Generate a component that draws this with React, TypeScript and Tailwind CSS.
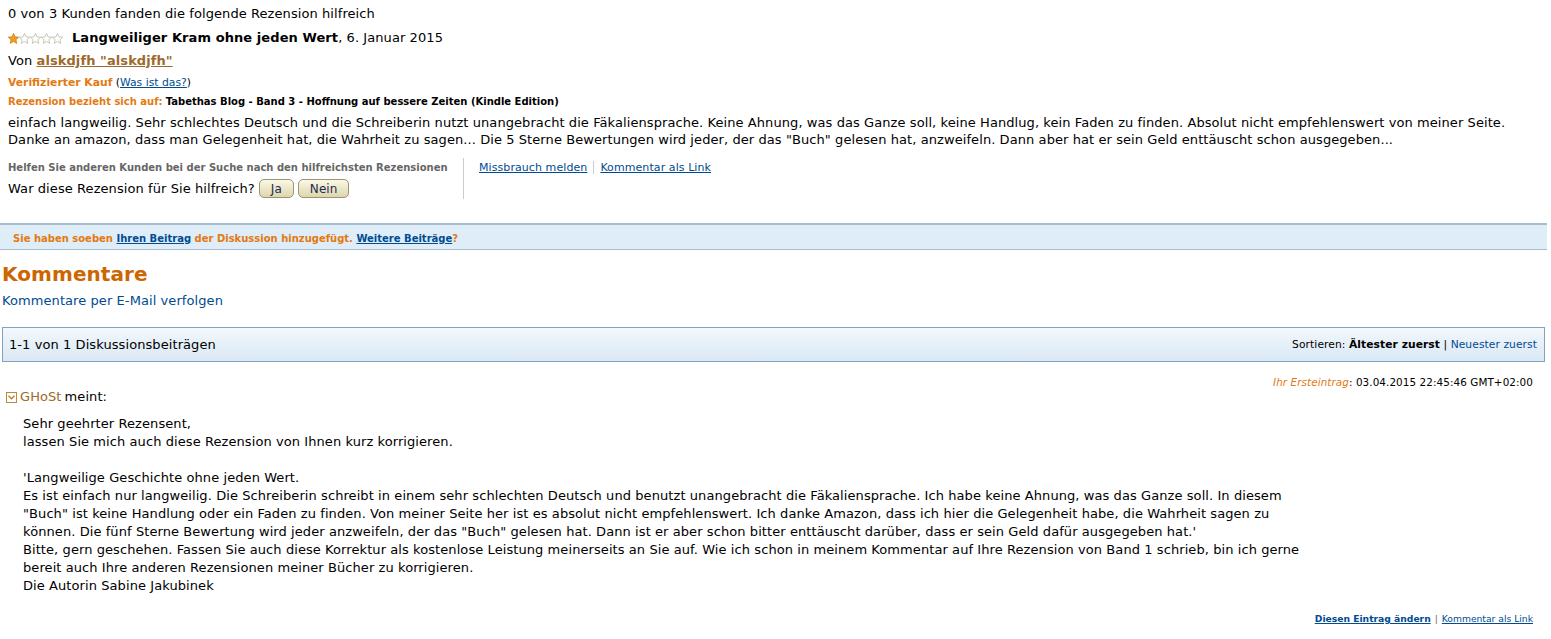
import React from "react";

function Star({ filled }: { filled: boolean }) {
  return (
    <svg width="11" height="11" viewBox="1 1 22 22" className="shrink-0">
      <path
        d="M12 1.8l3 6.9 7.5.7-5.7 5 1.7 7.4L12 17.9l-6.5 3.9 1.7-7.4-5.7-5 7.5-.7z"
        fill={filled ? "#f0a11c" : "#fff"}
        stroke={filled ? "#c97b10" : "#b5b5a0"}
        strokeWidth="1.5"
        strokeLinejoin="round"
      />
    </svg>
  );
}

function VoteButton({ label }: { label: string }) {
  return (
    <button className="h-[19px] px-[11px] rounded-[5px] border border-[#9a9470] bg-gradient-to-b from-[#fbf8e6] to-[#ddd6ae] text-[12px] leading-none text-[#1c2a55]">
      {label}
    </button>
  );
}

const body = [
  "Sehr geehrter Rezensent,",
  "lassen Sie mich auch diese Rezension von Ihnen kurz korrigieren.",
  "",
  "'Langweilige Geschichte ohne jeden Wert.",
  "Es ist einfach nur langweilig. Die Schreiberin schreibt in einem sehr schlechten Deutsch und benutzt unangebracht die Fäkaliensprache. Ich habe keine Ahnung, was das Ganze soll. In diesem",
  "\"Buch\" ist keine Handlung oder ein Faden zu finden. Von meiner Seite her ist es absolut nicht empfehlenswert. Ich danke Amazon, dass ich hier die Gelegenheit habe, die Wahrheit sagen zu",
  "können. Die fünf Sterne Bewertung wird jeder anzweifeln, der das \"Buch\" gelesen hat. Dann ist er aber schon bitter enttäuscht darüber, dass er sein Geld dafür ausgegeben hat.'",
  "Bitte, gern geschehen. Fassen Sie auch diese Korrektur als kostenlose Leistung meinerseits an Sie auf. Wie ich schon in meinem Kommentar auf Ihre Rezension von Band 1 schrieb, bin ich gerne",
  "bereit auch Ihre anderen Rezensionen meiner Bücher zu korrigieren.",
  "Die Autorin Sabine Jakubinek",
];

export default function App() {
  return (
    <div className="w-[1551px] h-[639px] overflow-hidden bg-white text-black font-['DejaVu_Sans',Verdana,sans-serif] text-[13px] tracking-[0.08px]">
      {/* review */}
      <div className="px-2 pt-[5px]">
        <div className="leading-[18px]">0 von 3 Kunden fanden die folgende Rezension hilfreich</div>
        <div className="flex items-center mt-[6px] leading-[18px]">
          <div className="flex w-[64px]">
            <Star filled />
            <Star filled={false} />
            <Star filled={false} />
            <Star filled={false} />
            <Star filled={false} />
          </div>
          <span className="font-bold">Langweiliger Kram ohne jeden Wert</span>
          <span>, 6. Januar 2015</span>
        </div>
        <div className="mt-[5px] leading-[18px]">
          Von{" "}
          <a href="#" className="font-bold text-[#9c6a2e] underline">
            alskdjfh "alskdjfh"
          </a>
        </div>
        <div className="mt-[5px] text-[10.8px] leading-[15px] tracking-normal">
          <span className="font-bold text-[#e47911]">Verifizierter Kauf</span>{" "}
          (<a href="#" className="text-[#004b91] underline">Was ist das?</a>)
        </div>
        <div className="mt-[4px] text-[10px] leading-[15px] tracking-normal">
          <span className="font-bold text-[#e47911]">Rezension bezieht sich auf:</span>{" "}
          <span className="font-bold">Tabethas Blog - Band 3 - Hoffnung auf bessere Zeiten (Kindle Edition)</span>
        </div>
        <p className="mt-[5px] leading-[17px] pr-8">
          einfach langweilig. Sehr schlechtes Deutsch und die Schreiberin nutzt unangebracht die Fäkaliensprache. Keine Ahnung, was das Ganze soll, keine Handlug, kein Faden zu finden. Absolut nicht empfehlenswert von meiner Seite. Danke an amazon, dass man Gelegenheit hat, die Wahrheit zu sagen... Die 5 Sterne Bewertungen wird jeder, der das "Buch" gelesen hat, anzweifeln. Dann aber hat er sein Geld enttäuscht schon ausgegeben...
        </p>
        <div className="flex mt-[10px]">
          <div className="w-[455px] pt-[3px]">
            <div className="text-[10px] font-bold text-[#666] leading-[14px] tracking-normal">
              Helfen Sie anderen Kunden bei der Suche nach den hilfreichsten Rezensionen
            </div>
            <div className="flex items-center gap-[4px] mt-[4px] leading-[18px]">
              <span>War diese Rezension für Sie hilfreich?</span>
              <VoteButton label="Ja" />
              <VoteButton label="Nein" />
            </div>
          </div>
          <div className="border-l border-[#ccc] h-[41px] pl-[15px] pt-[3px] text-[11px] leading-[14px] flex items-start">
            <a href="#" className="text-[#004b91] underline">Missbrauch melden</a>
            <span className="mx-[6px] h-[13px] border-l border-[#ccc]" />
            <a href="#" className="text-[#004b91] underline">Kommentar als Link</a>
          </div>
        </div>
      </div>

      {/* notice */}
      <div className="mt-[24px] mr-[4px] border-t-2 border-b border-[#a7bccd] bg-[#dfedf8] h-[27px] flex items-center pl-[13px] pt-[2px] text-[10px] font-bold text-[#e47911] tracking-normal">
        <span>
          Sie haben soeben <a href="#" className="text-[#004b91] underline">Ihren Beitrag</a> der Diskussion hinzugefügt.{" "}
          <a href="#" className="text-[#004b91] underline">Weitere Beiträge</a>?
        </span>
      </div>

      <div className="px-[2px] mr-[4px]">
        <h2 className="mt-[11px] text-[20px] font-bold text-[#cc6600] leading-[26px]">Kommentare</h2>
        <a href="#" className="block mt-[5px] text-[#004b91] leading-[18px]">Kommentare per E-Mail verfolgen</a>

        <div className="mt-[17px] h-[35px] border border-[#7fa3c0] bg-gradient-to-b from-[#f3f8fc] to-[#d9e8f4] flex items-center justify-between pl-[6px] pr-[7px] pt-[1px]">
          <span>1-1 von 1 Diskussionsbeiträgen</span>
          <span className="text-[10.7px]">
            Sortieren: <span className="font-bold">Ältester zuerst</span> |{" "}
            <a href="#" className="text-[#004b91]">Neuester zuerst</a>
          </span>
        </div>

        <div className="flex justify-end pr-[12px] mt-[13px] text-[10.4px] leading-[14px]">
          <span>
            <i className="text-[#e47911]">Ihr Ersteintrag</i>: 03.04.2015 22:45:46 GMT+02:00
          </span>
        </div>
        <div className="flex items-center gap-[3px] pl-[4px] leading-[16px]">
          <span className="w-[11px] h-[11px] border border-[#b88a4a] flex items-center justify-center">
            <svg width="7" height="5" viewBox="0 0 7 5">
              <path d="M0.5 0.8 L3.5 3.8 L6.5 0.8" fill="none" stroke="#c77a1a" strokeWidth="1.3" />
            </svg>
          </span>
          <span className="text-[#a0692a]">GHoSt</span>
          <span>meint:</span>
        </div>
        <div className="pl-[21px] mt-[10px] leading-[18px] whitespace-nowrap">
          {body.map((line, i) => (
            <div key={i} className="min-h-[18px]">{line}</div>
          ))}
        </div>
        <div className="flex justify-end pr-[12px] mt-[17px] text-[9.2px] tracking-normal">
          <a href="#" className="font-bold text-[#004b91] underline">Diesen Eintrag ändern</a>
          <span className="mx-[4px] text-[#666]">|</span>
          <a href="#" className="text-[#004b91] underline">Kommentar als Link</a>
        </div>
      </div>
    </div>
  );
}
